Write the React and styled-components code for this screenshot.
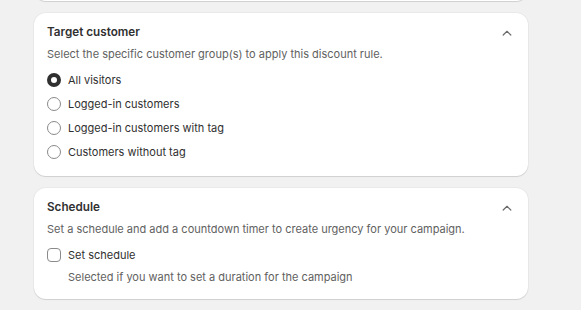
import { useState } from "react";
import styled, { createGlobalStyle } from "styled-components";

const GlobalStyle = createGlobalStyle`
  * { box-sizing: border-box; }
  body {
    margin: 0;
    background: #f1f1f1;
    font-family: Inter, "Noto Sans", sans-serif;
    -webkit-font-smoothing: antialiased;
  }
`;

const Page = styled.div`
  width: 494px;
  margin-left: 34px;
  display: flex;
  flex-direction: column;
  gap: 12px;
  padding-bottom: 10px;
`;

const Card = styled.section`
  background: #fff;
  border-radius: 12px;
  padding: 10px 16px ${(p) => p.$bottom || 14}px 13px;
  box-shadow: 0 1px 0 0 rgba(26, 26, 26, 0.08), 0 0 0 1px rgba(0, 0, 0, 0.03),
    0 1px 2px rgba(0, 0, 0, 0.04);
`;

// the card scrolled above the window, only its lower edge shows
const CutCard = styled(Card)`
  height: 13px;
  margin-top: -12px;
  padding: 0;
  border-radius: 0 0 12px 12px;
`;

const Header = styled.div`
  display: flex;
  justify-content: space-between;
  align-items: flex-start;
`;

const Title = styled.h2`
  margin: 0;
  font-size: 11.7px;
  line-height: 19px;
  font-weight: 600;
  color: #303030;
`;

const Toggle = styled.button`
  border: 0;
  background: none;
  padding: 0;
  margin-top: 7px;
  display: flex;
  color: #6b6b6b;
  cursor: pointer;
`;

const Subtitle = styled.p`
  margin: 2px 0 6px;
  font-size: 11px;
  line-height: 20px;
  color: #616161;
`;

const Options = styled.div`
  display: flex;
  flex-direction: column;
  gap: 4px;
`;

const Option = styled.label`
  display: flex;
  align-items: center;
  gap: 7px;
  font-size: 11px;
  line-height: 20px;
  color: #303030;
  cursor: pointer;
`;

const Radio = styled.span`
  width: 14px;
  height: 14px;
  border-radius: 50%;
  flex: none;
  background: #fff;
  border: ${(p) => (p.$checked ? "4px solid #303030" : "1px solid #8a8a8a")};
`;

const Box = styled.span`
  width: 14px;
  height: 14px;
  border-radius: 4px;
  flex: none;
  background: #fff;
  border: 1px solid #8a8a8a;
`;

const Help = styled.div`
  margin-top: 2px;
  padding-left: 21px;
  font-size: 11px;
  line-height: 20px;
  color: #616161;
`;

const Chevron = () => (
  <svg width="10" height="6" viewBox="0 0 10 6" fill="none">
    <path
      d="M1.2 5L5 1.3L8.8 5"
      stroke="currentColor"
      strokeWidth="1.2"
      strokeLinecap="round"
      strokeLinejoin="round"
    />
  </svg>
);

const customers = [
  "All visitors",
  "Logged-in customers",
  "Logged-in customers with tag",
  "Customers without tag",
];

export default function App() {
  const [target, setTarget] = useState(0);

  return (
    <>
      <GlobalStyle />
      <Page>
        <CutCard />
        <Card>
          <Header>
            <Title>Target customer</Title>
            <Toggle>
              <Chevron />
            </Toggle>
          </Header>
          <Subtitle>
            Select the specific customer group(s) to apply this discount rule.
          </Subtitle>
          <Options>
            {customers.map((c, i) => (
              <Option key={c} onClick={() => setTarget(i)}>
                <Radio $checked={target === i} />
                {c}
              </Option>
            ))}
          </Options>
        </Card>
        <Card $bottom={12}>
          <Header>
            <Title>Schedule</Title>
            <Toggle>
              <Chevron />
            </Toggle>
          </Header>
          <Subtitle>
            Set a schedule and add a countdown timer to create urgency for your
            campaign.
          </Subtitle>
          <Option>
            <Box />
            Set schedule
          </Option>
          <Help>Selected if you want to set a duration for the campaign</Help>
        </Card>
      </Page>
    </>
  );
}
